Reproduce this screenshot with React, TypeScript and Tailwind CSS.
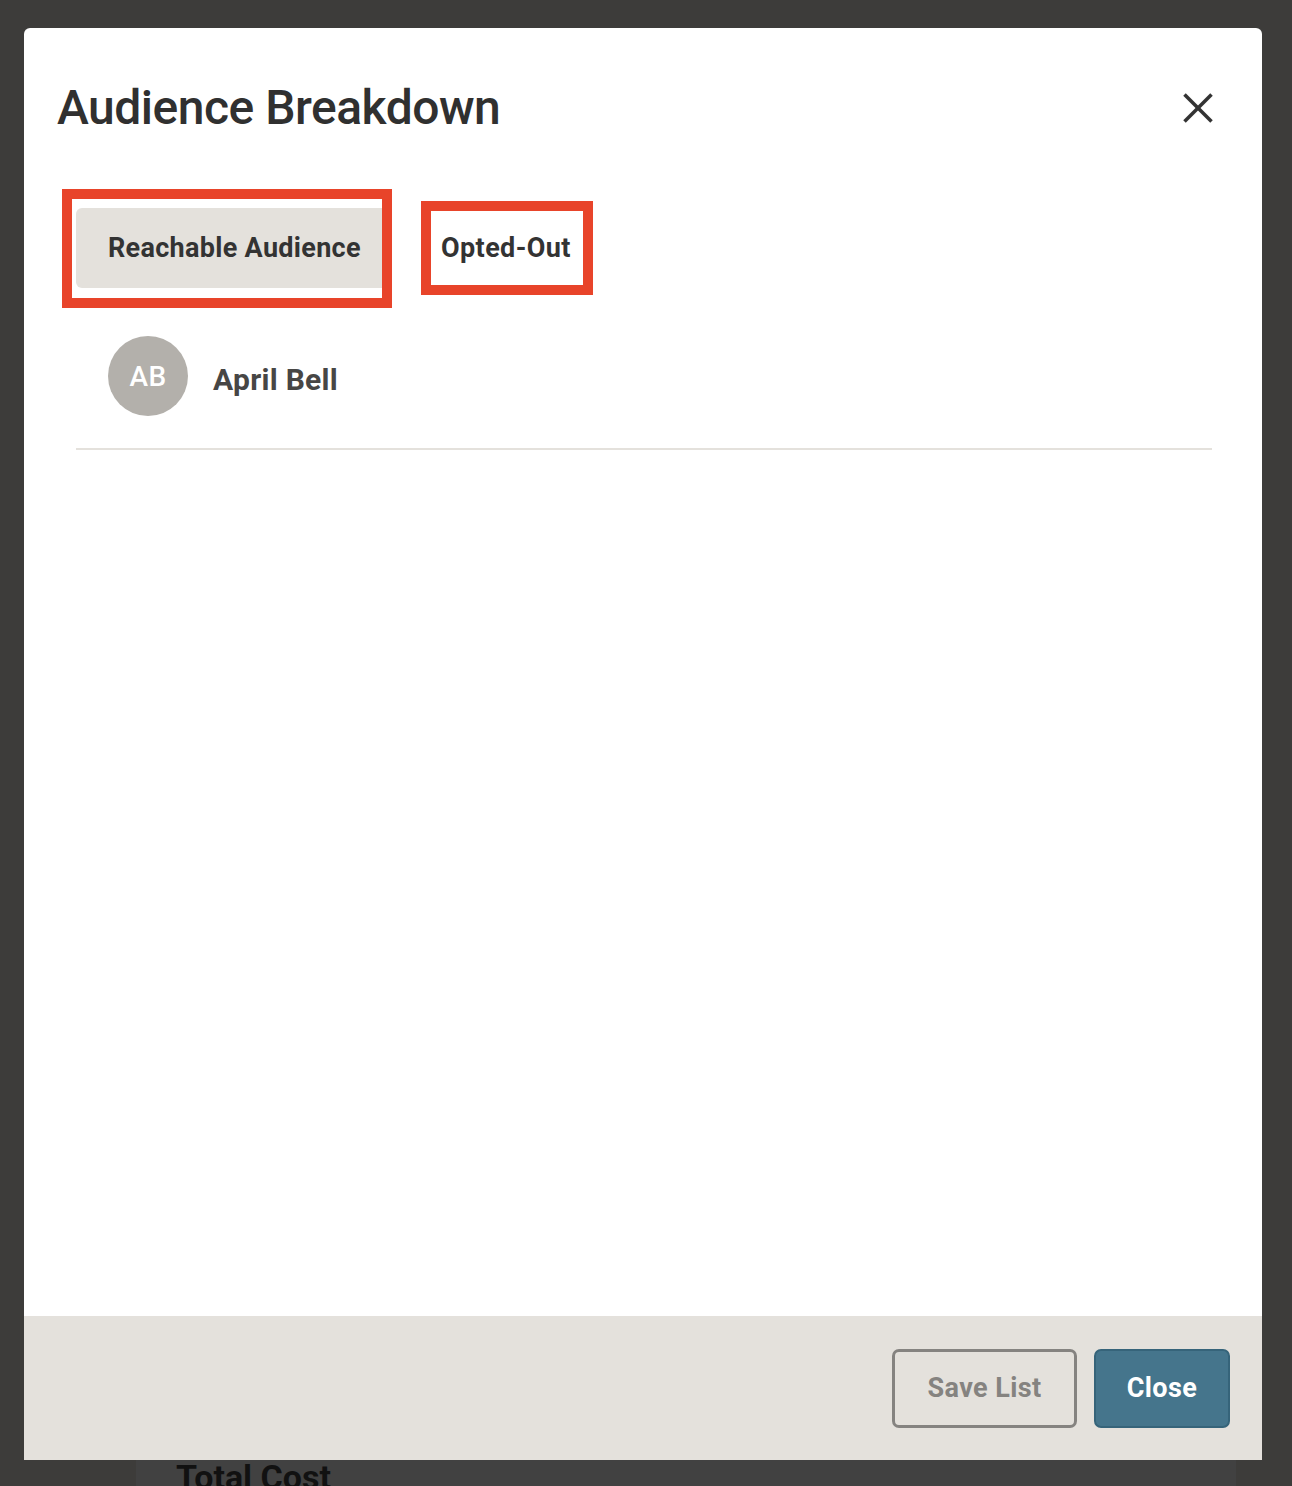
import React from "react";

const FONT = { fontFamily: "Roboto, 'Liberation Sans', sans-serif" };

function CloseIcon() {
  return (
    <svg width="30" height="30" viewBox="0 0 30 30" fill="none" stroke="#333333" strokeWidth="3.6" strokeLinecap="butt">
      <line x1="1.5" y1="1.5" x2="28.5" y2="28.5" />
      <line x1="28.5" y1="1.5" x2="1.5" y2="28.5" />
    </svg>
  );
}

export default function App() {
  return (
    <div className="h-[1486px] w-full overflow-hidden bg-[#3d3c3a] flex flex-col" style={FONT}>
      {/* Modal */}
      <div className="ml-[24px] mt-[28px] w-[1238px] h-[1432px] bg-white rounded-t-[6px] flex flex-col shrink-0">
        {/* header */}
        <div className="flex items-center justify-between pt-[56px] pl-[33px] pr-[49px]">
          <h1 className="text-[48px] leading-none font-medium tracking-[-0.5px] text-[#303030]">Audience Breakdown</h1>
          <button className="w-[30px] h-[30px]">
            <CloseIcon />
          </button>
        </div>

        {/* tabs (with red annotation frames) */}
        <div className="flex items-start mt-[57px] ml-[38px]">
          <div className="border-[10px] border-[#e8442a] pl-[4px] pt-[9px] pb-[10px] w-[330px] h-[119px]">
            <button className="h-[80px] w-full bg-[#e4e1dc] rounded-l-[6px] pl-[32px] text-left text-[27px] font-bold tracking-[0.3px] text-[#333333]">
              Reachable Audience
            </button>
          </div>
          <div className="ml-[29px] mt-[12px] border-[10px] border-[#e8442a] w-[172px] h-[94px] flex items-center pl-[10px]">
            <span className="text-[27px] font-bold tracking-[0.4px] text-[#333333] leading-none">Opted-Out</span>
          </div>
        </div>

        {/* list */}
        <div className="ml-[52px] mr-[50px] mt-[28px] pl-[32px] pb-[32px] border-b-2 border-[#e4e1dc] flex items-center gap-[25px]">
          <div className="w-[80px] h-[80px] rounded-full bg-[#b3b0ab] flex items-center justify-center text-white text-[28px] font-medium tracking-[0.5px] pt-[2px]">
            AB
          </div>
          <span className="text-[30px] font-bold tracking-[0.3px] text-[#474645] pt-[6px]">April Bell</span>
        </div>

        <div className="flex-1" />

        {/* footer */}
        <div className="h-[144px] bg-[#e4e1dc] flex items-center justify-end gap-[17px] pr-[32px]">
          <button className="w-[185px] h-[79px] border-[3px] border-[#858380] rounded-[7px] text-[27px] font-bold tracking-[0.4px] text-[#858380]">
            Save List
          </button>
          <button className="w-[136px] h-[79px] bg-[#45758c] border-2 border-[#36647a] rounded-[7px] text-[27px] font-bold tracking-[0.4px] text-white">
            Close
          </button>
        </div>
      </div>

      {/* page underneath */}
      <div className="flex-1 ml-[136px] w-[1100px] bg-[#414141] pl-[40px]">
        <div className="text-[34px] font-bold leading-none text-[#111111]">Total Cost</div>
      </div>
    </div>
  );
}
